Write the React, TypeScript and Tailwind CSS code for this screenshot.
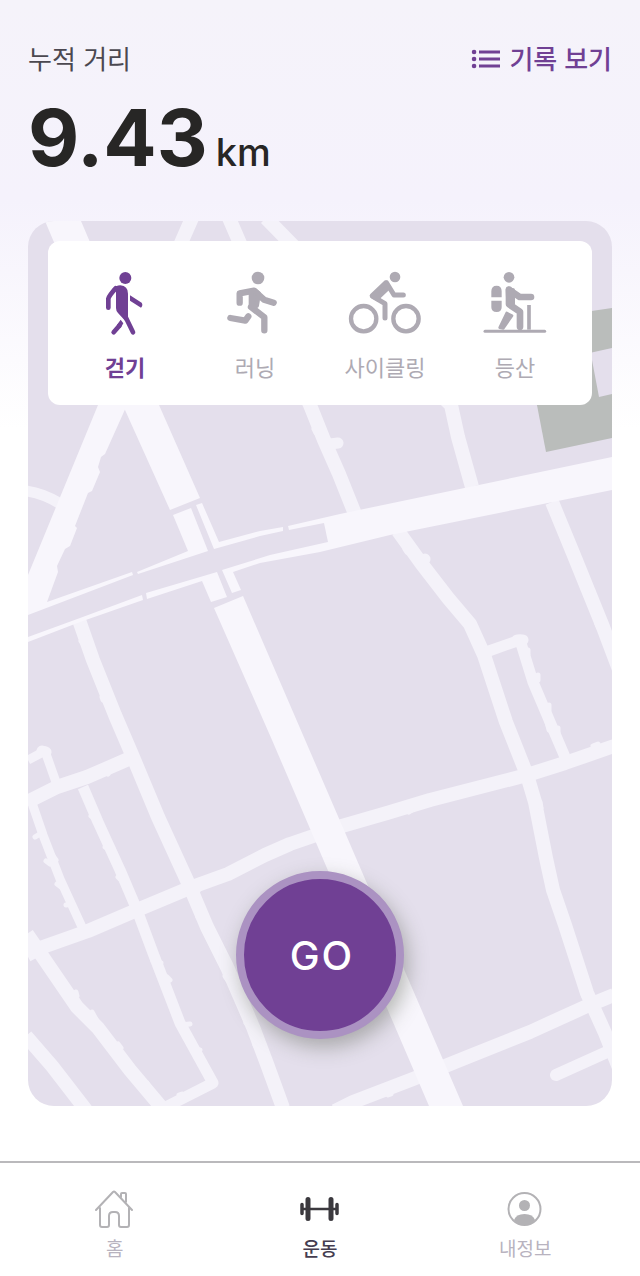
import { useState } from "react";
import type { ReactNode } from "react";

type Item = { label: string; icon: ReactNode };

function WalkIcon() {
    return (
        <svg viewBox="51 64 228 198" className="h-[66px] w-[76px]" fill="none" stroke="currentColor" strokeWidth="14" strokeLinecap="round" strokeLinejoin="round" aria-hidden="true">
            <circle cx="166" cy="85" r="18" fill="currentColor" stroke="none" />
            <path d="M126 119Q138 107 151 107Q174 109 174 132V201L166 214L144 190Q138 184 138 175V120Z" fill="currentColor" stroke="none" />
            <path d="M115 174V147Q117 138 137 116M165 198L189 248M131 248L148 228" />
            <path d="M180 137L215 159Q220 167 213 174L180 153ZM152 210L160 221L152 235L140 227Z" fill="currentColor" stroke="none" />
        </svg>
    );
}

function RunIcon() {
    return (
        <svg viewBox="441 64 228 198" className="h-[66px] w-[76px]" fill="none" stroke="currentColor" strokeWidth="19" strokeLinecap="round" strokeLinejoin="round" aria-hidden="true">
            <circle cx="564" cy="85" r="19" fill="currentColor" stroke="none" />
            <path d="M509 159V131L552 123L582 150L611 159M543 172L583 203V242M535 200L526 213L481 205" />
            <path d="M543 126L554 122L566 132L560 168L543 172Z" fill="currentColor" strokeWidth="14" />
        </svg>
    );
}

function BikeIcon() {
    return (
        <svg viewBox="81 64 228 198" className="h-[66px] w-[76px]" fill="none" stroke="currentColor" strokeLinecap="round" strokeLinejoin="round" aria-hidden="true">
            <circle cx="225" cy="82" r="16" fill="currentColor" stroke="none" />
            <circle cx="131" cy="207" r="38" strokeWidth="13" />
            <circle cx="258" cy="207" r="38" strokeWidth="13" />
            <path d="M200 100L222 136H250M158 140L195 162V205" strokeWidth="15" />
            <path d="M197 99L156 138L175 149V142L205 114Z" fill="currentColor" strokeWidth="14" />
        </svg>
    );
}

function HikeIcon() {
    return (
        <svg viewBox="471 64 228 198" className="h-[66px] w-[76px]" fill="none" stroke="currentColor" strokeWidth="20" strokeLinecap="round" strokeLinejoin="round" aria-hidden="true">
            <circle cx="567" cy="83" r="16" fill="currentColor" stroke="none" />
            <path d="M514 143V125Q514 108 530 108Q545 108 545 125V143ZM514 153H545V173Q545 187 530 187Q514 187 514 173Z" fill="currentColor" stroke="none" />
            <path d="M567 120L599 142H633M567 120V164L600 186V231" />
            <path d="M564 122H578V162L566 164Z" fill="currentColor" strokeWidth="14" />
            <path d="M560 190L576 198L550 236L539 234Z" fill="currentColor" strokeWidth="8" />
            <path d="M627 166V240" strokeWidth="11" strokeLinecap="butt" />
            <path d="M495 245H674" strokeWidth="9" />
        </svg>
    );
}

function ListIcon() {
    return (
        <svg viewBox="0 0 30 22" className="h-[22px] w-[30px]" fill="none" stroke="currentColor" strokeWidth="3" aria-hidden="true">
            <path d="M8 4H29M8 11H29M8 18H29" />
            <path d="M3 4H3.1M3 11H3.1M3 18H3.1" strokeWidth="4.5" strokeLinecap="round" />
        </svg>
    );
}

function HomeIcon() {
    return (
        <svg viewBox="0 0 40 40" className="size-10" fill="none" stroke="#b3b2b5" strokeWidth="2" strokeLinecap="round" strokeLinejoin="round" aria-hidden="true">
            <path d="M1 21L18 3Q19 2 20 3L37 21M5 19V36Q5 38 7 38H12Q14 38 14 36V27Q14 23 18 23H20Q24 23 24 27V36Q24 38 26 38H32Q34 38 34 36V19M26 8V5Q26 4 27 4H30Q31 4 31 5V13" />
        </svg>
    );
}

function DumbbellIcon() {
    return (
        <svg viewBox="0 0 40 40" className="size-10" fill="none" stroke="#3b393e" strokeLinecap="round" aria-hidden="true">
            <path d="M3 20H36" strokeWidth="2.5" />
            <path d="M8 10.5V29.5M31 10.5V29.5" strokeWidth="5" />
            <path d="M2 15.5V24.5M37 15.5V24.5" strokeWidth="3.5" />
        </svg>
    );
}

function UserIcon() {
    return (
        <svg viewBox="0 0 40 40" className="size-10" aria-hidden="true">
            <circle cx="19.5" cy="20" r="16" fill="none" stroke="#b3b2b5" strokeWidth="2" />
            <circle cx="19.5" cy="16.5" r="5.5" fill="#b3b2b5" />
            <path d="M9 31Q11 25 19.5 25Q28 25 30 31Q26 36 19.5 36Q13 36 9 31Z" fill="#b3b2b5" />
        </svg>
    );
}

function StreetMap() {
    return (
        <svg viewBox="28 221 584 885" preserveAspectRatio="xMidYMid slice" className="absolute inset-0 h-full w-full" aria-hidden="true">
            {/* park */}
            <path d="M530 320L612 308V438L546 452L536 400Z" fill="#babdbb" />
            <path d="M585 354L612 348V394L599 397L592 360Z" fill="#e4dfec" />

            {/* side streets */}
            <g fill="none" stroke="#f4f2f9" strokeWidth="14" strokeLinejoin="round">
                <path d="M192 218L110 405M229 218L310 405L324 440L339 474L355 514M266 218L400 355L451 405L458 437L472 487" />
                <path d="M398 531L421 563L448 598L470 624L484 655L506 722L527 775L535 802L546 858L553 890L565 925L587 993L605 1033L625 1083" />
                <path d="M552 502L573 553L588 590L603 627L620 672" />
                <path d="M614 746L565 763L527 775L430 800L387 813L335 828M325 832L290 844L265 855L228 874L192 887L137 910L88 931L40 948L27 955" />
                <path d="M79 620L93 660L115 715L133 757L158 817L190 887L207 927L227 967L253 1027L267 1064L283 1108" />
                <path d="M27 802L57 787L87 777L133 757" />
                <path d="M27 934L38 950L77 1007L98 1028L130 1070L162 1108M26 1036L52 1066L86 1110" />
                <path d="M614 995L587 1006L530 1032L470 1056L413 1079L353 1102L335 1111" />
                <path d="M556 1075L607 1052" strokeLinecap="round" strokeWidth="12" />
            </g>
            <g fill="none" stroke="#f4f2f9" strokeWidth="11" strokeLinejoin="round">
                <path d="M83 787L98 822L120 870L137 910L153 953L180 1023L213 1083L160 1110" />
                <path d="M26 491Q42 493 59 503M486 652L520 640L533 682L550 722L565 757" />
                <path d="M28 760L45 751L57 785M32 803L43 835L60 879L82 927" strokeWidth="9" />
            </g>

            {/* driveways and corners along the streets */}
            <g fill="none" stroke="#f4f2f9" strokeWidth="5" strokeLinecap="round" strokeLinejoin="round">
                <path d="M330 444L338 443M420 561L425 559M517 640L523 640M42 751L46 752" strokeWidth="11" />
                <path d="M528 650V654M529 667L532 672M538 675V680M549 705V710M547 722L549 730M558 728V733M505 728L508 732" />
                <path d="M314 429L316 433M331 461L333 469M405 549L407 552M457 613L461 617M579 560L580 564M590 588L591 591M592 608L593 611M597 624L600 630" />
                <path d="M35 837L40 834M41 829L43 833M46 861L50 864M53 856L56 860M57 884L61 887M66 905L72 904" />
                <path d="M91 816L96 811M105 847L113 849M118 877L122 881M146 937L150 940M153 961L161 963M167 977L170 980M181 1025L190 1024M192 1049L200 1050M207 1069L210 1072" />
                <path d="M86 630L87 634M81 641L84 645M102 697L103 700M115 723L117 727M147 795L149 799M196 889L198 891M198 917L202 921M225 976L227 979M246 1023L250 1026M255 1045L257 1048M263 1064L265 1068" />
                <path d="M106 772L108 774M225 876L226 877M264 859L266 857M296 846L299 844M165 900L166 902M363 824L366 821M409 812L412 810M593 746L598 744" />
                <path d="M76 992L77 996M92 1012L97 1021M118 1044L121 1048M147 1083L149 1087M179 1095L182 1094" />
                <path d="M540 802L541 808M535 814L537 820M549 888L551 892M558 916L560 920M582 990L584 997M468 1060L471 1058M519 1040L525 1037M388 1095L391 1094" />
            </g>

            {/* main roads */}
            <g fill="#f8f6fc">
                <path d="M45 221H81L159 405L200 498L170 510L125 410Z" />
                <path d="M98 405H127L105 454L101 457L98 467L100 472L92 491L88 493L75 526L77 528L70 546L65 549L57 566L58 572L47 602L132 572L133 575L28 615V575Z" />
                <path d="M173 515L191 508L208 551L138 574L137 572L188 551Z" />
                <path d="M196 505L202 503L219 542L260 531L283 527V531L260 536L214 549Z" />
                <path d="M288 526L340 514L612 457V490L390 535L320 552L260 563L233 572L241 590L232 593L222 570L270 555L328 542L324 523L289 530Z" />
                <path d="M28 637L80 618L142 595L143 600L80 622L28 642Z" />
                <path d="M146 593L217 572L227 597L211 602L202 581L147 599Z" />
                <path d="M214 608L243 596L463 1106H429L272 740Z" />
            </g>
        </svg>
    );
}

const activities: Item[] = [
    { label: "걷기", icon: <WalkIcon /> },
    { label: "러닝", icon: <RunIcon /> },
    { label: "사이클링", icon: <BikeIcon /> },
    { label: "등산", icon: <HikeIcon /> },
];

const tabs: Item[] = [
    { label: "홈", icon: <HomeIcon /> },
    { label: "운동", icon: <DumbbellIcon /> },
    { label: "내정보", icon: <UserIcon /> },
];

export default function App() {
    const [activity, setActivity] = useState("걷기");
    const currentTab = "운동";

    return (
        <div className="flex min-h-screen flex-col bg-white bg-[linear-gradient(to_bottom,#f5f3fa_0px,#f5f2fc_200px,#ffffff_430px)] font-['Inter','Noto_Sans_CJK_KR',sans-serif]">
            <main className="flex flex-1 flex-col px-7 pt-[41px] pb-[55px]">
                <header>
                    <div className="flex h-9 items-center justify-between text-[26px]">
                        <h1 className="text-[#4b4850]">누적 거리</h1>
                        <a href="#records" className="flex items-center gap-2 font-medium text-[#704094]">
                            <ListIcon />
                            기록 보기
                        </a>
                    </div>
                    <p className="mt-5 flex items-baseline gap-2 text-[#272625]">
                        <span className="text-[79px] leading-[80px] font-bold">9.43</span>
                        <span className="text-[38px] leading-[40px] font-medium">km</span>
                    </p>
                </header>

                <section aria-label="지도" className="relative mt-11 flex min-h-[480px] flex-1 flex-col overflow-hidden rounded-[26px] bg-[#e4dfec]">
                    <StreetMap />
                    <div className="relative m-5 grid h-[164px] grid-cols-4 rounded-xl bg-white px-3">
                        {activities.map((item) => (
                            <button
                                key={item.label}
                                type="button"
                                aria-pressed={activity === item.label}
                                onClick={() => setActivity(item.label)}
                                className={`flex cursor-pointer flex-col items-center pt-[30px] text-[22px] leading-8 ${activity === item.label ? "font-bold text-[#704094]" : "text-[#aeaab3]"}`}
                            >
                                {item.icon}
                                <span className="mt-[15px]">{item.label}</span>
                            </button>
                        ))}
                    </div>
                    <button
                        type="button"
                        className="absolute bottom-[67px] left-1/2 size-[168px] -translate-x-1/2 cursor-pointer rounded-full border-8 border-[#ab92c2] bg-[#704094] pt-0.5 pl-1 text-[40px] font-medium tracking-wider text-white shadow-[4px_8px_20px_rgba(60,70,50,0.35)]"
                    >
                        GO
                    </button>
                </section>
            </main>

            <nav className="grid h-[115px] grid-cols-3 border-t-2 border-[#bab9bc] bg-white px-3">
                {tabs.map((tab) => (
                    <a
                        key={tab.label}
                        href="#"
                        aria-current={tab.label === currentTab ? "page" : undefined}
                        className={`flex flex-col items-center pt-[26px] text-[19px] leading-7 ${tab.label === currentTab ? "font-medium text-[#453d50]" : "text-[#b8b3bf]"}`}
                    >
                        {tab.icon}
                        <span className="mt-[7px]">{tab.label}</span>
                    </a>
                ))}
            </nav>
        </div>
    );
}
